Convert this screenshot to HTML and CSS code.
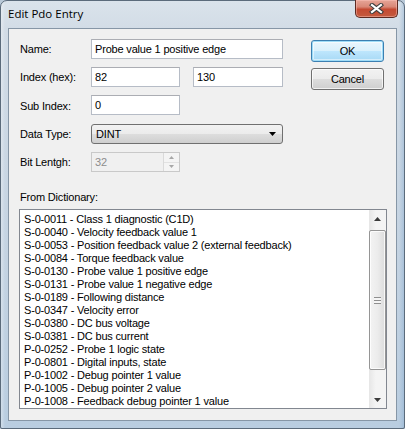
FILE: index.html
```html
<!DOCTYPE html>
<html>
<head>
<meta charset="utf-8">
<link rel="stylesheet" href="styles.css">
</head>
<body>
<div class="window">
  <div class="titlebar">
    <span class="title">Edit Pdo Entry</span>
    <div class="close">
      <svg width="15" height="11" viewBox="0 0 15 11">
        <path d="M3 2 L12 9 M12 2 L3 9" stroke="#3d3d3d" stroke-width="4.2" stroke-linecap="square"/>
        <path d="M3 2 L12 9 M12 2 L3 9" stroke="#ffffff" stroke-width="2.2" stroke-linecap="square"/>
      </svg>
    </div>
  </div>
  <div class="client">
    <div class="top">
      <div class="fields">
        <span class="lbl">Name:</span>
        <div class="input wide">Probe value 1 positive edge</div>
        <span class="lbl">Index (hex):</span>
        <div class="input c2">82</div>
        <div class="input c4">130</div>
        <span class="lbl">Sub Index:</span>
        <div class="input c2 start">0</div>
        <span class="lbl">Data Type:</span>
        <div class="combo wide"><span>DINT</span>
          <svg width="7" height="4" viewBox="0 0 7 4"><path d="M0 0 H7 L3.5 4 Z" fill="#000"/></svg>
        </div>
        <span class="lbl">Bit Lentgh:</span>
        <div class="input c2 disabled"><span>32</span>
          <div class="spin">
            <div class="spin-btn"><svg width="5" height="3" viewBox="0 0 5 3"><path d="M0 3 H5 L2.5 0 Z" fill="#a7a7a7"/></svg></div>
            <div class="spin-btn"><svg width="5" height="3" viewBox="0 0 5 3"><path d="M0 0 H5 L2.5 3 Z" fill="#a7a7a7"/></svg></div>
          </div>
        </div>
      </div>
      <div class="buttons">
        <div class="btn default">OK</div>
        <div class="btn">Cancel</div>
      </div>
    </div>
    <div class="dict">
      <div class="dict-label">From Dictionary:</div>
      <div class="listbox">
        <ul class="items">
          <li>S-0-0011 - Class 1 diagnostic (C1D)</li>
          <li>S-0-0040 - Velocity feedback value 1</li>
          <li>S-0-0053 - Position feedback value 2 (external feedback)</li>
          <li>S-0-0084 - Torque feedback value</li>
          <li>S-0-0130 - Probe value 1 positive edge</li>
          <li>S-0-0131 - Probe value 1 negative edge</li>
          <li>S-0-0189 - Following distance</li>
          <li>S-0-0347 - Velocity error</li>
          <li>S-0-0380 - DC bus voltage</li>
          <li>S-0-0381 - DC bus current</li>
          <li>P-0-0252 - Probe 1 logic state</li>
          <li>P-0-0801 - Digital inputs, state</li>
          <li>P-0-1002 - Debug pointer 1 value</li>
          <li>P-0-1005 - Debug pointer 2 value</li>
          <li>P-0-1008 - Feedback debug pointer 1 value</li>
        </ul>
        <div class="vscroll">
          <div class="sb-arrow"><svg width="7" height="4" viewBox="0 0 7 4"><path d="M0 4 H7 L3.5 0 Z" fill="#3b3b3b"/></svg></div>
          <div class="sb-track">
            <div class="thumb">
              <div class="grip"></div>
            </div>
          </div>
          <div class="sb-arrow"><svg width="7" height="4" viewBox="0 0 7 4"><path d="M0 0 H7 L3.5 4 Z" fill="#3b3b3b"/></svg></div>
        </div>
      </div>
    </div>
  </div>
</div>
</body>
</html>
```

FILE: styles.css
```css
* { box-sizing: border-box; }
html, body { margin: 0; padding: 0; }
body {
  width: 405px;
  height: 429px;
  overflow: hidden;
  background: #b9c9d8;
  font-family: "Liberation Sans", Arial, sans-serif;
  font-size: 11px;
  letter-spacing: -0.18px;
  color: #000;
}
.window {
  width: 405px;
  height: 429px;
  display: flex;
  flex-direction: column;
  padding: 0 7px 7px 7px;
  border: 1px solid #5b6b7b;
  border-radius: 7px 7px 2px 2px;
  background:
    linear-gradient(90deg, rgba(255,255,255,0.35) 0, rgba(255,255,255,0) 4px, rgba(255,255,255,0) calc(100% - 5px), rgba(120,160,200,0.35) 100%),
    linear-gradient(180deg, #dae3eb 0, #d2dce6 28px, #c4d3e2 60%, #b9cde0 100%);
}
.titlebar {
  height: 27px;
  display: flex;
  justify-content: space-between;
  align-items: flex-start;
}
.title {
  font-family: "Open Sans", "Noto Sans", sans-serif;
  font-size: 11.5px;
  letter-spacing: 0;
  padding-top: 5px;
  color: #000;
}
.close {
  width: 43px;
  height: 18px;
  margin-top: -1px;
  margin-right: -1px;
  border: 1px solid #5d2a21;
  border-top: none;
  border-radius: 0 0 5px 5px;
  background: linear-gradient(180deg, #e6a597 0, #d98877 40%, #c44a32 55%, #c45b3f 100%);
  box-shadow: inset 0 0 0 1px rgba(255,200,190,0.45);
  display: flex;
  align-items: center;
  justify-content: center;
}
.client {
  flex: 1;
  background: #f0f0f0;
  border: 1px solid #8696a6;
  padding-top: 10px;
  display: flex;
  flex-direction: column;
}
.top {
  display: flex;
  padding: 0 12px 0 11px;
}
.fields {
  display: grid;
  grid-template-columns: 71px 89px 13px 90px;
  grid-template-rows: 20px 20px 21px 20px 20px;
  row-gap: 8px;
}
.lbl {
  grid-column: 1;
  align-self: center;
  white-space: nowrap;
}
.input {
  height: 20px;
  background: #fff;
  border: 1px solid #b6bcc6;
  border-top-color: #abadb3;
  padding: 0 3px;
  display: flex;
  align-items: center;
  white-space: nowrap;
  overflow: hidden;
}
.wide { grid-column: 2 / 5; }
.c2 { grid-column: 2; }
.c4 { grid-column: 4; }
.start { align-self: start; }
.combo {
  height: 20px;
  border: 1px solid #707070;
  border-radius: 3px;
  background: linear-gradient(180deg, #f2f2f2 0, #ebebeb 50%, #dddddd 51%, #cfcfcf 100%);
  display: flex;
  align-items: center;
  justify-content: space-between;
  padding: 0 6px 0 4px;
}
.input.disabled {
  background: #f0f0f0;
  border-color: #c9c9c9;
  color: #8d8d8d;
  justify-content: space-between;
  padding-right: 0;
}
.spin {
  display: flex;
  flex-direction: column;
  width: 16px;
  height: 18px;
  border-left: 1px solid #dadada;
}
.spin-btn {
  flex: 1;
  display: flex;
  align-items: center;
  justify-content: center;
  background: #f4f4f4;
  border-bottom: 1px solid #e2e2e2;
}
.spin-btn:last-child { border-bottom: none; }
.buttons {
  margin-left: auto;
  padding-top: 1px;
  display: flex;
  flex-direction: column;
  gap: 6px;
}
.btn {
  width: 73px;
  height: 22px;
  border: 1px solid #707070;
  border-radius: 3px;
  background: linear-gradient(180deg, #f2f2f2 0, #ebebeb 50%, #dddddd 51%, #cfcfcf 100%);
  box-shadow: inset 0 0 0 1px rgba(255,255,255,0.7);
  display: flex;
  align-items: center;
  justify-content: center;
}
.btn.default {
  border-color: #3c7fb1;
  background: linear-gradient(180deg, #eaf6fd 0, #d9f0fc 50%, #bee6fd 51%, #a7d9f5 100%);
  box-shadow: inset 0 0 0 1px #9fdcf7, inset 0 0 0 2px rgba(255,255,255,0.5);
}
.dict {
  padding: 0 9px 0 10px;
}
.dict-label {
  margin-top: 19px;
  padding-left: 1px;
  line-height: 13px;
}
.listbox {
  margin-top: 5px;
  height: 200px;
  border: 1px solid #828790;
  background: #fff;
  display: flex;
}
.items {
  list-style: none;
  margin: 0;
  padding: 3px 0 0 4px;
  flex: 1;
  overflow: hidden;
}
.items li {
  height: 13px;
  line-height: 13px;
  white-space: nowrap;
}
.vscroll {
  width: 17px;
  display: flex;
  flex-direction: column;
  background: linear-gradient(90deg, #e6e6e6 0, #f4f4f4 40%, #f4f4f4 100%);
}
.sb-arrow {
  height: 17px;
  display: flex;
  align-items: center;
  justify-content: center;
}
.sb-track {
  flex: 1;
  padding: 3px 0 4px 0;
  display: flex;
  flex-direction: column;
}
.thumb {
  height: 140px;
  border: 1px solid #959595;
  border-radius: 2px;
  background: linear-gradient(90deg, #f3f3f3 0, #ececec 50%, #dcdcdc 100%);
  box-shadow: inset 0 0 0 1px rgba(255,255,255,0.8);
  display: flex;
  align-items: center;
  justify-content: center;
}
.grip {
  width: 7px;
  height: 7px;
  background: repeating-linear-gradient(180deg, #8f8f8f 0, #8f8f8f 1px, #f5f5f5 1px, #f5f5f5 3px);
}
```
